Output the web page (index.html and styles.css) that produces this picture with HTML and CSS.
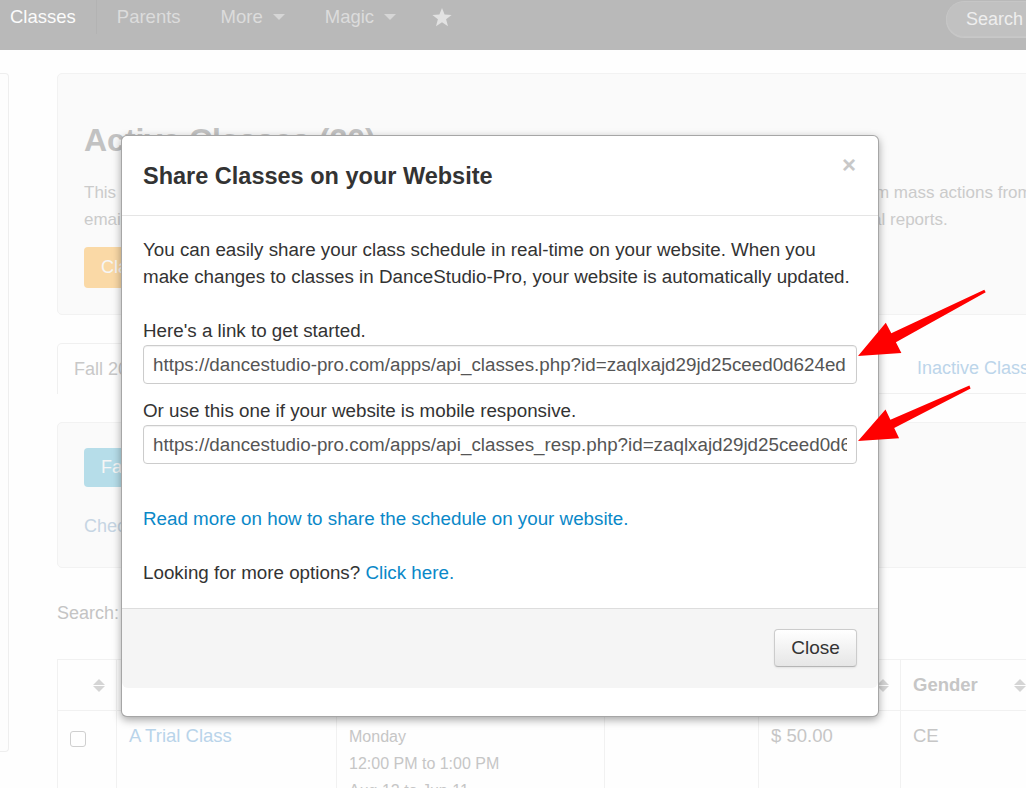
FILE: index.html
```html
<!DOCTYPE html>
<html lang="en">
<head>
    <meta charset="UTF-8">
    <meta name="viewport" content="width=device-width, initial-scale=1.0">
    <title>Classes - DanceStudio-Pro</title>
    <link rel="stylesheet" href="styles.css">
</head>
<body>
    <nav class="navbar">
        <a class="nav-item active">Classes</a>
        <a class="nav-item">Parents</a>
        <a class="nav-item">More <span class="caret"></span></a>
        <a class="nav-item">Magic <span class="caret"></span></a>
        <a class="nav-item star">
            <svg width="20" height="19" viewBox="0 0 20 19"><polygon points="10,0 12.6,6.6 19.6,6.9 14.1,11.3 16,18.3 10,14.3 4,18.3 5.9,11.3 0.4,6.9 7.4,6.6" fill="#e2e2e2"/></svg>
        </a>
        <div class="nav-search">Search</div>
    </nav>

    <div class="page">
        <aside class="sidebar"></aside>

        <main class="content">
            <section class="hero">
                <h1>Active Classes (20)</h1>
                <p>This page lists all of the active classes in this studio. Use the checkboxes in the table below to also perform mass actions from<br>
                emails and text messages to parents, print rosters, take attendance and export all of your monthly financial reports.</p>
                <button class="btn btn-orange">Class Options</button>
            </section>

            <ul class="tabs">
                <li class="tab active">Fall 2019</li>
                <li class="tab inactive">Inactive Classes</li>
            </ul>

            <section class="well">
                <button class="btn btn-blue">Fall 2019 Schedule</button>
                <p class="well-link">Check all classes</p>
            </section>

            <div class="search-row">Search:</div>

            <table class="class-table">
                <colgroup>
                    <col style="width: 59px">
                    <col style="width: 220px">
                    <col style="width: 268px">
                    <col style="width: 154px">
                    <col style="width: 142px">
                    <col style="width: 137px">
                    <col>
                </colgroup>
                <thead>
                    <tr>
                        <th class="sortable"></th>
                        <th class="sortable">Class</th>
                        <th class="sortable">Schedule</th>
                        <th class="sortable">Instructor</th>
                        <th class="sortable">Tuition</th>
                        <th class="sortable">Gender</th>
                        <th>Ages</th>
                    </tr>
                </thead>
                <tbody>
                    <tr>
                        <td><span class="checkbox"></span></td>
                        <td><span class="link">A Trial Class</span></td>
                        <td class="small">Monday<br>12:00 PM to 1:00 PM<br>Aug 12 to Jun 11</td>
                        <td></td>
                        <td>$ 50.00</td>
                        <td>CE</td>
                        <td></td>
                    </tr>
                </tbody>
            </table>
        </main>
    </div>

    <div class="modal">
        <div class="modal-header">
            <h3>Share Classes on your Website</h3>
            <span class="close">&times;</span>
        </div>
        <div class="modal-body">
            <p class="intro">You can easily share your class schedule in real-time on your website. When you make changes to classes in DanceStudio-Pro, your website is automatically updated.</p>
            <label>Here's a link to get started.</label>
            <input type="text" class="url" value="https://dancestudio-pro.com/apps/api_classes.php?id=zaqlxajd29jd25ceed0d624ed" readonly>
            <label>Or use this one if your website is mobile responsive.</label>
            <input type="text" class="url" value="https://dancestudio-pro.com/apps/api_classes_resp.php?id=zaqlxajd29jd25ceed0d624ed" readonly>
            <p class="read-more"><a href="#">Read more on how to share the schedule on your website.</a></p>
            <p class="more">Looking for more options? <a href="#">Click here.</a></p>
        </div>
        <div class="modal-footer">
            <button class="btn-close">Close</button>
        </div>
    </div>

    <!-- annotation arrows pointing at the two links -->
    <svg class="arrows" width="1026" height="788" viewBox="0 0 1026 788">
        <polygon points="984.3,289.7 891.3,333.3 885.8,322.7 858,356 901.4,352.9 895.9,342.3 985.7,292.3" fill="#ff0000"/>
        <polygon points="969.4,385.6 890.4,419.7 885.5,409.4 858,441 899.1,438.3 894.2,427.9 970.6,388.4" fill="#ff0000"/>
    </svg>
</body>
</html>
```

FILE: styles.css
```css
* {
    margin: 0;
    padding: 0;
    box-sizing: border-box;
}

body {
    font-family: "Liberation Sans", Arial, sans-serif;
    font-size: 17px;
    background-color: #fefefe;
    width: 1026px;
    height: 788px;
    overflow: hidden;
    position: relative;
}

/* top navigation */
.navbar {
    display: flex;
    align-items: flex-start;
    height: 50px;
    background-color: #b9b9b9;
    overflow: hidden;
}

.nav-item {
    display: flex;
    align-items: center;
    height: 34px;
    padding: 0 20px;
    font-size: 18.5px;
    color: #dcdcdc;
}

.nav-item.active {
    color: #fbfbfb;
    padding-left: 10px;
    border-right: 1px solid #b3b3b3;
}

.caret {
    display: inline-block;
    width: 0;
    height: 0;
    margin-left: 10px;
    border-top: 6px solid #d6d6d6;
    border-left: 6px solid transparent;
    border-right: 6px solid transparent;
}

.nav-item.star {
    padding-left: 16px;
}

.nav-search {
    margin-left: auto;
    margin-right: -130px;
    margin-top: 1px;
    width: 210px;
    height: 36px;
    line-height: 34px;
    padding-left: 19px;
    border-radius: 18px;
    background-color: #c1c1c1;
    border: 1px solid #c6c6c6;
    box-shadow: 0 1px 0 #c8c8c8;
    color: #eeeeee;
    font-size: 18px;
}

/* page behind the modal */
.page {
    display: flex;
    align-items: flex-start;
    padding-top: 23px;
}

.sidebar {
    width: 9px;
    height: 679px;
    background-color: #fdfdfd;
    border: 1px solid #eeeeee;
    border-left: none;
    border-radius: 0 4px 4px 0;
    flex-shrink: 0;
}

.content {
    margin-left: 48px;
    width: 1100px;
    flex-shrink: 0;
}

.hero {
    height: 242px;
    padding: 48px 26px 0;
    background-color: #fafafa;
    border: 1px solid #f2f2f2;
    border-radius: 5px;
}

.hero h1 {
    font-size: 32px;
    line-height: 36px;
    color: #c2c2c2;
}

.hero p {
    margin-top: 21px;
    line-height: 27px;
    color: #cbcbcb;
    white-space: nowrap;
}

.btn {
    border: none;
    border-radius: 4px;
    color: #f6f6f6;
    font-family: inherit;
    font-size: 18px;
    padding: 0 17px;
}

.btn-orange {
    margin-top: 14px;
    height: 41px;
    background-color: #fad9a6;
}

.btn-blue {
    height: 39px;
    background-color: #b6dde9;
}

.tabs {
    list-style: none;
    display: flex;
    margin-top: 28px;
    height: 51px;
    border-bottom: 1px solid #f0f0f0;
}

.tab {
    height: 50px;
    line-height: 50px;
    padding: 0 17px;
    font-size: 18px;
}

.tab.active {
    width: 160px;
    height: 51px;
    padding-left: 16px;
    color: #c8c8c8;
    background-color: #fefefe;
    border: 1px solid #f0f0f0;
    border-bottom: none;
    border-radius: 5px 5px 0 0;
}

.tab.inactive {
    margin-left: 683px;
    color: #bcd5ea;
}

.well {
    margin-top: 28px;
    height: 146px;
    padding: 25px 26px 0;
    background-color: #fafafa;
    border: 1px solid #f2f2f2;
    border-radius: 5px;
}

.well-link {
    margin-top: 26px;
    line-height: 27px;
    color: #c6d5e3;
    font-size: 18px;
}

.search-row {
    margin-top: 32px;
    line-height: 27px;
    color: #c4c4c4;
    font-size: 18px;
}

.class-table {
    margin-top: 32px;
    border-collapse: collapse;
    table-layout: fixed;
    width: 1100px;
    color: #c6c6c6;
    font-size: 18.5px;
}

.class-table th,
.class-table td {
    border: 1px solid #f1f1f1;
    text-align: left;
    vertical-align: top;
}

.class-table th {
    height: 51px;
    padding: 0 12px;
    font-weight: bold;
    vertical-align: middle;
    position: relative;
}

/* sort arrows: up triangle over down triangle */
.class-table th.sortable::before,
.class-table th.sortable::after {
    content: "";
    position: absolute;
    right: 11px;
    width: 12px;
    height: 6px;
    background-color: #d5d5d5;
}

.class-table th.sortable::before {
    top: 19px;
    clip-path: polygon(50% 0, 100% 100%, 0 100%);
}

.class-table th.sortable::after {
    top: 26px;
    clip-path: polygon(0 0, 100% 0, 50% 100%);
}

.class-table td {
    height: 90px;
    padding: 11px 12px;
    line-height: 27px;
}

.class-table td.small {
    font-size: 16px;
    padding-top: 12px;
}

.checkbox {
    display: inline-block;
    width: 16px;
    height: 16px;
    margin-top: 9px;
    border: 1px solid #cfcfcf;
    border-radius: 3px;
}

.link {
    color: #b9d4ea;
}

/* modal dialog */
.modal {
    position: absolute;
    left: 121px;
    top: 135px;
    width: 758px;
    padding-bottom: 28px;
    background-color: #ffffff;
    border: 1px solid rgba(0, 0, 0, 0.35);
    border-radius: 6px;
    box-shadow: 0 3px 8px rgba(0, 0, 0, 0.35);
    color: #333333;
    font-size: 18.8px;
}

.modal-header {
    display: flex;
    align-items: flex-start;
    justify-content: space-between;
    height: 80px;
    padding: 25px 21px 0;
    border-bottom: 1px solid #e5e5e5;
}

.modal-header h3 {
    font-size: 23.5px;
    line-height: 30px;
    font-weight: bold;
}

.close {
    margin-top: -8px;
    margin-right: 1px;
    font-size: 24px;
    line-height: 24px;
    font-weight: bold;
    color: #c8c8c8;
}

.modal-body {
    padding: 20px 21px 22px;
    line-height: 27px;
}

.modal-body label {
    display: block;
}

.intro {
    margin-bottom: 27px;
}

.url {
    display: block;
    width: 100%;
    height: 39px;
    margin-top: 1px;
    margin-bottom: 13px;
    padding: 0 9px;
    border: 1px solid #cccccc;
    border-radius: 4px;
    font-family: inherit;
    font-size: 18.8px;
    color: #555555;
    box-shadow: inset 0 1px 1px rgba(0, 0, 0, 0.06);
}

.read-more {
    margin-top: 41px;
}

.more {
    margin-top: 27px;
}

.modal-body a {
    color: #0a88c8;
    text-decoration: none;
}

.modal-footer {
    height: 80px;
    padding: 20px 21px 0;
    text-align: right;
    background-color: #f5f5f5;
    border-top: 1px solid #dddddd;
    border-radius: 0 0 6px 6px;
}

.btn-close {
    width: 83px;
    height: 38px;
    border: 1px solid #cccccc;
    border-bottom-color: #b5b5b5;
    border-radius: 4px;
    background: linear-gradient(#ffffff, #e6e6e6);
    box-shadow: 0 1px 2px rgba(0, 0, 0, 0.08);
    font-family: inherit;
    font-size: 19px;
    color: #333333;
}

.arrows {
    position: absolute;
    left: 0;
    top: 0;
    pointer-events: none;
}
```
